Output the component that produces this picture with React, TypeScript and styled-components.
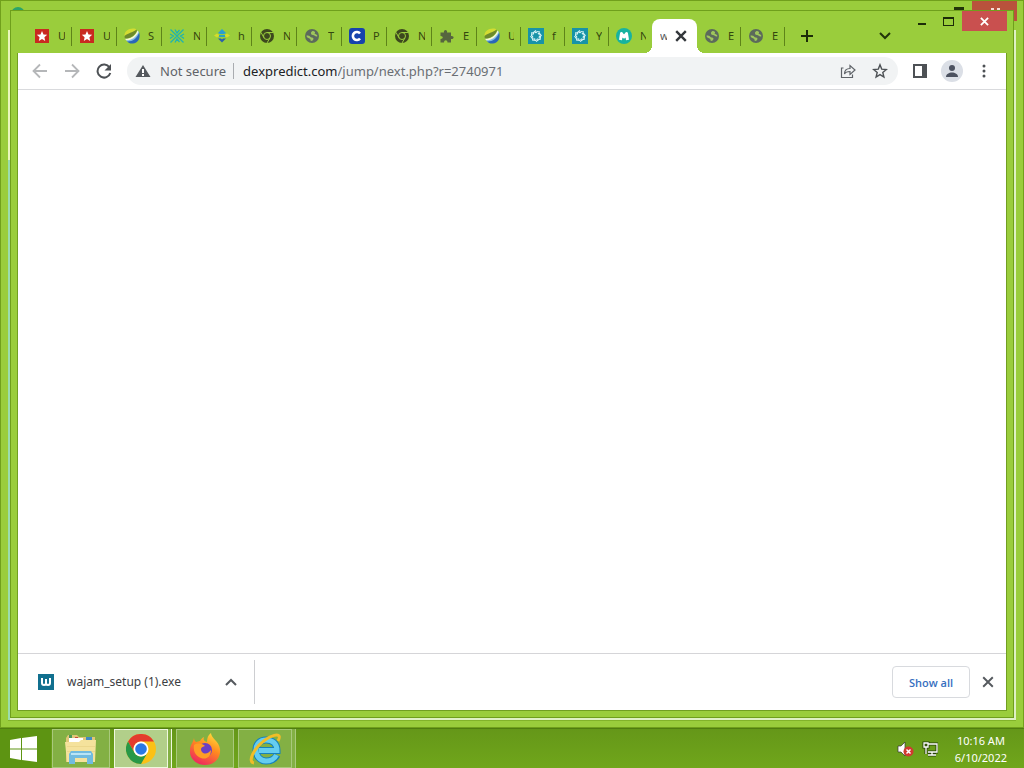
import React from 'react';
import styled, { createGlobalStyle, css } from 'styled-components';

const Global = createGlobalStyle`
  * { box-sizing: border-box; }
  body { margin: 0; font-family: "Noto Sans", "Open Sans", sans-serif; font-size: 13px; color: #3c4043; }
  button { font: inherit; color: inherit; background: none; border: 0; padding: 0; display: flex; align-items: center; justify-content: center; flex: none; }
  svg { display: block; flex: none; }
`;
const Desktop = styled.div`
  display: flex; flex-direction: column; min-height: 100vh; background: #9acd3c;
`;
const BackWindow = styled.section`
  position: relative; flex: 1; display: flex; padding: 9px 7px 7px;
  background: #9acd3c; border: 1px solid #71a01c;
`;
const BackPane = styled.div`
  flex: 1; display: flex; min-width: 0; padding: 0 2px 2px;
  background:
    linear-gradient(#9acd3c 20px, #eaf7bd 20px, #eaf7bd 150px, #9bdcae 150px) left / 2px 100% no-repeat,
    linear-gradient(#9acd3c 20px, #dff0c4 20px);
  box-shadow: 0 1px 0 #82b32a;
`;
const BackClose = styled.span`
  position: absolute; top: 0; right: 6px; width: 45px; height: 20px; background: #b9523c;
`;
const BackCloseMark = styled.span`
  position: absolute; top: 7px; right: 23px; width: 9px; height: 2px; background: linear-gradient(90deg, #f5dcd6 3px, transparent 3px, transparent 6px, #f5dcd6 6px);
`;
const BackMax = styled.span`
  position: absolute; top: 6px; right: 59px; width: 10px; height: 3px; background: #22350a;
`;
const BackIcon = styled.span`
  position: absolute; top: 6px; left: 10px; width: 14px; height: 7px; border-radius: 7px 7px 0 0; background: #2aa46a;
`;
const Window = styled.main`
  position: relative; flex: 1; min-width: 0; display: flex; flex-direction: column;
  background: #9acd3c; border: 1px solid #6f9f1c; padding: 0 6px 6px;
`;
const Caption = styled.div`
  position: absolute; top: 0; right: 6px; display: flex;
`;
const CaptionButton = styled.button<{ $close?: boolean }>`
  width: ${p => (p.$close ? 45 : 27)}px; height: 20px;
  background: ${p => (p.$close ? '#c9504f' : 'transparent')};
`;
const TabStrip = styled.nav`
  display: flex; align-items: flex-end; height: 42px; padding: 0 0 0 10px;
`;
const Tab = styled.button<{ $narrow?: boolean; $active?: boolean; $plain?: boolean }>`
  && { justify-content: flex-start; }
  position: relative; width: ${p => (p.$narrow ? 44 : 45)}px; height: 34px; padding: 0 7px; gap: 8px;
  font-size: 11px; color: #33470f;
  &::after { content: ''; position: absolute; right: 0; top: 8px; width: 1px; height: 19px; background: ${p => (p.$plain ? 'transparent' : '#5e8419')}; }
  ${p => p.$active && css`
    margin-left: -1px; background: #fff; border-radius: 8px 8px 0 0; padding: 0 8px; color: #55595e;
    &::before { content: ''; position: absolute; left: -8px; right: -8px; bottom: 0; height: 8px;
      background: radial-gradient(circle at 0 0, transparent 8px, #fff 8px) left / 8px 8px no-repeat,
        radial-gradient(circle at 100% 0, transparent 8px, #fff 8px) right / 8px 8px no-repeat; }
  `}
`;
const TabTitle = styled.span`
  width: 7px; overflow: hidden; white-space: nowrap; line-height: 16px; text-align: left;
`;
const StripButton = styled.button<{ $end?: boolean }>`
  width: 28px; height: 34px; margin-left: ${p => (p.$end ? 'auto' : '8px')}; margin-right: ${p => (p.$end ? '108px' : '0')};
`;
const Page = styled.div`
  flex: 1; display: flex; flex-direction: column; background: #fff; border: solid #719f22; border-width: 0 1px 1px;
`;
const Toolbar = styled.header`
  display: flex; align-items: center; height: 37px; padding: 0 6px; border-bottom: 1px solid #d9dadd;
`;
const ToolButton = styled.button`
  width: 32px; height: 32px;
`;
const Address = styled.form`
  flex: 1; display: flex; align-items: center; height: 28px; min-width: 0; margin: 0 6px 0 7px; padding: 0 2px 0 6px;
  border-radius: 14px; background: #f1f3f4;
`;
const Warning = styled.span`
  padding: 0 7px; color: #5f6368; white-space: nowrap; border-right: 1px solid #a9acb0; line-height: 16px;
`;
const UrlBox = styled.div`
  position: relative; flex: 1; min-width: 0; height: 20px; margin-left: 9px;
`;
const urlText = css`
  font: 13px/20px "Noto Sans", "Open Sans", sans-serif;
`;
const UrlInput = styled.input`
  ${urlText} display: block; width: 100%; height: 20px; padding: 0; border: 0; outline: 0; background: none; color: #6a6e73;
`;
const UrlHost = styled.span`
  ${urlText} position: absolute; left: 0; top: 0; color: #202124; background: #f1f3f4; pointer-events: none;
`;
const Avatar = styled.span`
  display: grid; place-items: center; width: 22px; height: 22px; border-radius: 50%; background: #dbdfe6;
`;
const Content = styled.div`
  flex: 1; background: #fff;
`;
const Shelf = styled.footer`
  display: flex; align-items: center; height: 57px; padding: 0 2px 0 20px; border-top: 1px solid #d5d5d8;
`;
const Download = styled.div`
  display: flex; align-items: center; width: 217px; height: 44px; padding-right: 7px; border-right: 1px solid #cdced1;
`;
const FileName = styled.span`
  flex: 1; padding-left: 13px; font-size: 12px; line-height: 18px; white-space: nowrap;
`;
const ShowAll = styled.button`
  && { color: #3670c0; }
  width: 78px; height: 32px; margin-left: auto; margin-right: 2px; border: 1px solid #d8dade; border-radius: 4px;
  font-family: "Open Sans", "Noto Sans", sans-serif; font-size: 11px; font-weight: 600;
`;
const Taskbar = styled.footer`
  display: flex; height: 40px; border-top: 1px solid #507d10; background: linear-gradient(#659719, #70a61b);
`;
const Start = styled.button`
  width: 51px; padding-right: 3px; background: #5d9412;
`;
const Task = styled.button<{ $active?: boolean; $stack?: boolean }>`
  width: ${p => (p.$stack ? 54 : 58)}px; margin-left: 1px; margin-right: ${p => (p.$stack ? 7 : 3)}px;
  background: ${p => (p.$active ? '#b2cf8a' : '#83b044')};
  border: 1px solid ${p => (p.$active ? '#eff8df' : '#a9c97c')};
  box-shadow: ${p => (p.$stack ? `3px 0 0 #83b044, 4px 0 0 ${p.$active ? '#eff8df' : '#a9c97c'}` : 'none')};
`;
const Tray = styled.div`
  display: flex; align-items: center; gap: 8px; margin-left: auto; padding-right: 17px;
`;
const Clock = styled.time`
  padding-left: 9px; color: #fff; font-size: 11px; line-height: 17px; text-align: center; white-space: nowrap;
`;

const Star = () => (
  <svg width="16" height="16" viewBox="0 0 16 16"><path fill="#c92a20" d="M1 1h14v14H1z" /><path fill="#fff" d="m8 3 1.5 3.4 3.7.4-2.8 2.4.8 3.7L8 11l-3.2 1.9.8-3.7-2.8-2.4 3.7-.4z" /></svg>
);
const Swirl = () => (
  <svg width="16" height="16" viewBox="0 0 16 16"><path fill="#2a66b8" d="M3 13C9 13 13 9 15 4c2 6-1 11-6 11.500-2.500.3-4.500-.5-6-2.500Z" /><path fill="#7fb9e6" d="M2 12c5 0 10-3 12.500-9L15 5c-2 5-6 8.500-11.500 8.500Z" /><path fill="#f4f8de" d="M1 10.500c6 .5 10-2.500 12.500-8L14.500 4c-2.500 5.500-7 8.500-12.500 8.300Z" /><path fill="#6d8a2c" d="M.5 9C1 5 5 2.500 12 1.500l1 1C11 8 6 10.500 1 10.500Z" /><path fill="#d3dc32" d="M.5 8C0 4 4 .5 9 .5c1.500 0 3 .5 3.500 1C9 4.500 5 4.500.5 8Z" /></svg>
);
const Cross = () => (
  <svg width="16" height="16" viewBox="0 0 16 16" fill="none" stroke="#1fb3b0" strokeWidth="1.300"><path d="m1.500 1.500 13 13M14.500 1.500l-13 13M6 1.500 8 5l2.500-3M6 14.500 8 11l2.500 3M1 6l3.500 2L1 10.500M15 6l-3.500 2 3.500 2.500" /></svg>
);
const Diamond = () => (
  <svg width="16" height="16" viewBox="0 0 16 16"><path fill="#2a9fd0" d="m8 1 4 4-2 1H6L4 5z" /><path fill="#d6dc2a" d="m0 7.500 3-2L6 7.500l-3 2zM10 7.500l3-2 3 2-3 2z" /><path fill="#29a3c4" d="M5 7h6v2H5z" /><path fill="#2a5fae" d="M4 10.500h3L8 11.500l1-1h3l-4 4z" /></svg>
);
const ChromeGrey = () => (
  <svg width="16" height="16" viewBox="0 0 16 16"><circle cx="8" cy="8" r="7" fill="#3d481e" /><g fill="none" stroke="#9acd3c"><circle cx="8" cy="8" r="3.5" /><path d="M8 4.5h6M5 9.8 2 4.4M11 9.8 8 15" /></g></svg>
);
const Globe = () => (
  <svg width="16" height="16" viewBox="0 0 16 16"><circle cx="8" cy="8" r="7" fill="#5c6a5b" /><path fill="#9fc65c" d="M2.500 7.500c2 0 3 0 3.500 1 1 1.500 3.500.5 3.500 2.500-.5 1-1 2-2.500 2-1-1 0-2-1.500-2.500S2.500 9.500 2.500 7.500ZM7 4.500c.5-1.500 2.500-2 3.500-1s.5 1.500 0 2l2.500 1.500c.5 1 .5 1.500-.5 1.500-1.500 0-2-1.500-3.500-1.500C7 7 7 6 7 4.500Z" /></svg>
);
const CoinC = () => (
  <svg width="16" height="16" viewBox="0 0 16 16"><rect width="16" height="16" rx="3" fill="#1643ad" /><path fill="none" stroke="#fff" strokeWidth="2.600" d="M11 5.500a4 4 0 1 0 0 5" /></svg>
);
const Puzzle = () => (
  <svg width="16" height="16" viewBox="0 0 16 16"><path fill="#56653f" d="M1.500 4.500H5c-1-3.500 4-3.500 3 0h4v3.500c3.500-.5 3.500 3.500 0 3v3.500H8.500c0-3-3.500-3-3.500 0H1.500V11c3 0 3-3 0-3z" /></svg>
);
const Ring = () => (
  <svg width="16" height="16" viewBox="0 0 16 16"><path fill="#1793a8" d="M0 0h16v16H0z" /><g fill="none" stroke="#d5f4f5" strokeWidth="1.200"><path d="M8 2.500 5 5M12 4 8.500 3.500M13.500 8 11 5M12 12l.5-4M8 13.500l3.500-2.500M4 12l4 .5M2.500 8 5 11.500M4 4l-.5 4" /><circle cx="8" cy="8" r="3.500" strokeDasharray="2 1" /></g></svg>
);
const MLogo = () => (
  <svg width="16" height="16" viewBox="0 0 16 16"><circle cx="8" cy="8" r="8" fill="#17b3a0" /><path fill="none" stroke="#fff" strokeWidth="3" strokeLinejoin="round" d="M4.500 12 5.500 5.500 8 9l2.500-3.500 1 6.500" /></svg>
);
const X = ({ size = 10, color = '#33373b', w = 2 }: { size?: number; color?: string; w?: number }) => (
  <svg width={size} height={size} viewBox="0 0 10 10" stroke={color} strokeWidth={w}><path d="m1 1 8 8M9 1 1 9" /></svg>
);
const Arrow = ({ right }: { right?: boolean }) => (
  <svg width="16" height="16" viewBox="0 0 16 16" fill="none" stroke="#b5b7b9" strokeWidth="1.800"><path d={right ? 'M1 8h13M8 1.500 14.500 8 8 14.500' : 'M15 8H2M8 1.500 1.500 8 8 14.500'} /></svg>
);
const Explorer = () => (
  <svg width="34" height="32" viewBox="0 0 34 32"><path fill="#dfc677" d="M2 5 4 2h9l2 2h16v25H2z" /><path fill="#4b9a57" d="M5 2h3v3H5z" /><path fill="#c5493a" d="M11 4h3v2h-3z" /><path fill="#438bc2" d="M22 4h6v3h-6z" /><path fill="#fff" d="M5 5h14v3h9v3H5z" /><path fill="#f5e29c" d="M1 9h14l2-2h15l-1 22H3z" /><path fill="#ecd78c" d="M3 13h28v1H3zM3 18h28v1H3z" /><path fill="#71bbdf" d="M5 31V21l2-3h20l2 3v10h-6v-6H11v6z" /><path fill="#b9e4f5" d="M7 20h20v2H7z" /></svg>
);
const Chrome = () => (
  <svg width="30" height="30" viewBox="0 0 30 30"><circle cx="15" cy="15" r="15" fill="#fbc116" /><path fill="#e33b2e" d="M2 7.500A15 15 0 0 1 28 7.500H15a7.500 7.500 0 0 0-6.500 11.300z" /><path fill="#279847" d="M2 7.500A15 15 0 0 0 15 30l6.500-11.200A7.500 7.500 0 0 1 8.500 18.800z" /><circle cx="15" cy="15" r="7.500" fill="#fff" /><circle cx="15" cy="15" r="5.800" fill="#2b78e4" /></svg>
);
const Firefox = () => (
  <svg width="32" height="32" viewBox="0 0 32 32"><defs><linearGradient id="ff" x1=".8" y1="0" x2=".3" y2="1"><stop offset="0" stopColor="#ffdf3c" /><stop offset=".45" stopColor="#ff8a1f" /><stop offset="1" stopColor="#ee2361" /></linearGradient></defs><path fill="url(#ff)" d="M5 5c0 2 1 3 2 4l4-1c1-2 2-3 4-4-1 3 0 4 3 5 0-4 1-7 4-9 0 5 8 8 9 16 1 10-6 16-15 16S0 25 1 17C1 12 4 10 5 5Z" /><circle cx="16" cy="17" r="7" fill="#6a3fc5" /><path fill="#ff9d25" d="M5 12c4-3 9-1 11 1-4 1-5 3-3 6 3 3 7 1 9-2 0 7-5 10-10 8-6-2-8-8-7-13Z" /></svg>
);
const Explorer2 = () => (
  <svg width="34" height="34" viewBox="0 0 34 34" fill="none"><path stroke="#1581bd" strokeWidth="7" d="M29 23c-2 4-6 6-11 6-6 0-10-5-10-11S12 8 18 8c7 0 11 4 11 10.500H11" /><path stroke="#65cdf1" strokeWidth="5" d="M28.500 23c-2 4-6 6-10.500 6-6 0-10-5-10-11S12 8 18 8c7 0 11 4 11 10.500H11" /><path stroke="#f1bd28" strokeWidth="3" d="M6 31C-1 30 6 16 17 8c7-5 13-6 14-4 1 1 0 3-1 5" /></svg>
);

type TabData = { title: string; icon: React.ReactNode; narrow?: boolean; plain?: boolean };
const before: TabData[] = [
  { title: 'U', icon: <Star /> }, { title: 'U', icon: <Star /> }, { title: 'S', icon: <Swirl /> },
  { title: 'N', icon: <Cross /> }, { title: 'h', icon: <Diamond /> }, { title: 'N', icon: <ChromeGrey /> },
  { title: 'T', icon: <Globe /> }, { title: 'P', icon: <CoinC /> }, { title: 'N', icon: <ChromeGrey /> },
  { title: 'E', icon: <Puzzle /> }, { title: 'U', icon: <Swirl />, narrow: true }, { title: 'f', icon: <Ring />, narrow: true },
  { title: 'Y', icon: <Ring />, narrow: true }, { title: 'N', icon: <MLogo />, narrow: true, plain: true },
];
const after: TabData[] = [{ title: 'E', icon: <Globe />, narrow: true }, { title: 'E', icon: <Globe />, narrow: true }];
const TabItem = ({ tab }: { tab: TabData }) => (
  <Tab type="button" $narrow={tab.narrow} $plain={tab.plain}>{tab.icon}<TabTitle>{tab.title}</TabTitle></Tab>
);

export default function App() {
  return (
    <Desktop>
      <Global />
      <BackWindow>
        <BackIcon /><BackMax /><BackClose /><BackCloseMark />
        <BackPane>
          <Window>
            <TabStrip aria-label="Tabs">
              {before.map((t, i) => <TabItem key={i} tab={t} />)}
              <Tab type="button" $active $plain><TabTitle>w</TabTitle><X size={12} /></Tab>
              {after.map((t, i) => <TabItem key={i} tab={t} />)}
              <StripButton type="button" aria-label="New tab"><svg width="12" height="12" viewBox="0 0 12 12" stroke="#1c2c08" strokeWidth="2"><path d="M6 0v12M0 6h12" /></svg></StripButton>
              <StripButton type="button" $end aria-label="Search tabs"><svg width="12" height="8" viewBox="0 0 12 8" fill="none" stroke="#22350a" strokeWidth="2"><path d="m1 1 5 5 5-5" /></svg></StripButton>
            </TabStrip>
            <Page>
              <Toolbar>
                <ToolButton type="button" aria-label="Back"><Arrow /></ToolButton>
                <ToolButton type="button" aria-label="Forward"><Arrow right /></ToolButton>
                <ToolButton type="button" aria-label="Reload"><svg width="16" height="16" viewBox="0 0 16 16"><path fill="none" stroke="#4d5155" strokeWidth="2" d="M13.500 4.500A6.500 6.500 0 1 0 14.300 10" /><path fill="#4d5155" d="M15 1v6.500H8.500z" /></svg></ToolButton>
                <Address>
                  <svg width="20" height="14" viewBox="0 0 20 14"><path fill="#55595e" d="m10 1 7.500 12h-15z" /><path fill="#fff" d="M9 5h2v4H9zM9 10h2v2H9z" /></svg>
                  <Warning>Not secure</Warning>
                  <UrlBox>
                    <UrlInput aria-label="Address" readOnly value="dexpredict.com/jump/next.php?r=2740971" />
                    <UrlHost aria-hidden="true">dexpredict.com</UrlHost>
                  </UrlBox>
                  <ToolButton type="button" aria-label="Share"><svg width="16" height="16" viewBox="0 0 16 16" fill="none" stroke="#5f6368" strokeWidth="1.200"><path d="M3.500 5H1.500v9.500h11v-3M4.500 11c0-4 2-5.500 5.500-5.500V2.500L15 7l-5 4.500v-3C7.500 8.500 5.500 9 4.500 11Z" /></svg></ToolButton>
                  <ToolButton type="button" aria-label="Bookmark"><svg width="16" height="16" viewBox="0 0 16 16" fill="none" stroke="#4d5155" strokeWidth="1.400"><path d="m8 1.800 1.700 4.300 4.600.4-3.500 3 1.100 4.500L8 11.600 4.100 14l1.100-4.500-3.500-3 4.600-.4z" /></svg></ToolButton>
                </Address>
                <ToolButton type="button" aria-label="Side panel"><svg width="14" height="14" viewBox="0 0 14 14"><path fill="#4d5155" d="M0 0h14v14H0z" /><path fill="#fff" d="M2 2h7v10H2z" /></svg></ToolButton>
                <ToolButton type="button" aria-label="Profile"><Avatar><svg width="14" height="14" viewBox="0 0 14 14" fill="#4c5260"><circle cx="7" cy="4" r="3" /><path d="M1 13c0-6 12-6 12 0z" /></svg></Avatar></ToolButton>
                <ToolButton type="button" aria-label="Menu"><svg width="4" height="14" viewBox="0 0 4 14" fill="#4d5155"><circle cx="2" cy="2" r="1.500" /><circle cx="2" cy="7" r="1.500" /><circle cx="2" cy="12" r="1.500" /></svg></ToolButton>
              </Toolbar>
              <Content />
              <Shelf>
                <Download>
                  <svg width="16" height="16" viewBox="0 0 16 16"><path fill="#11708f" d="M0 0h16v16H0z" /><path fill="none" stroke="#fff" strokeWidth="2" d="M4 4v5q0 2 2 2t2-2V5v4q0 2 2 2t2-2V4" /></svg>
                  <FileName>wajam_setup (1).exe</FileName>
                  <ToolButton type="button" aria-label="Download options"><svg width="12" height="8" viewBox="0 0 12 8" fill="none" stroke="#55595e" strokeWidth="2"><path d="m1 7 5-5 5 5" /></svg></ToolButton>
                </Download>
                <ShowAll type="button">Show all</ShowAll>
                <ToolButton type="button" aria-label="Close downloads"><X size={12} color="#55595e" w={1.6} /></ToolButton>
              </Shelf>
            </Page>
            <Caption>
              <CaptionButton type="button" aria-label="Minimize"><svg width="10" height="10" viewBox="0 0 10 10"><path fill="#1c2c08" d="M1 7h8v2H1z" /></svg></CaptionButton>
              <CaptionButton type="button" aria-label="Maximize"><svg width="11" height="9" viewBox="0 0 11 9"><path fill="#1c2c08" d="M0 0h11v9H0zM1 2v6h9V2z" fillRule="evenodd" /></svg></CaptionButton>
              <CaptionButton type="button" $close aria-label="Close"><X size={9} color="#fff" w={2} /></CaptionButton>
            </Caption>
          </Window>
        </BackPane>
      </BackWindow>
      <Taskbar>
        <Start type="button" aria-label="Start"><svg width="28" height="26" viewBox="0 0 28 26" fill="#fff"><path d="m0 4 11-2v10.500H0zM12 2l15-2v12.500H12zM0 13.500h11V24L0 22zM12 13.500h15V26l-15-2z" /></svg></Start>
        <Task type="button" aria-label="File Explorer"><Explorer /></Task>
        <Task type="button" $active $stack aria-label="Chrome"><Chrome /></Task>
        <Task type="button" aria-label="Firefox"><Firefox /></Task>
        <Task type="button" $stack aria-label="Internet Explorer"><Explorer2 /></Task>
        <Tray>
          <svg width="17" height="16" viewBox="0 0 17 16"><path fill="#fff" stroke="#333" strokeWidth=".7" d="M1 5h3l4-4v14l-4-4H1z" /><circle cx="11.500" cy="10.500" r="5" fill="#d13a30" /><path stroke="#fff" strokeWidth="1.500" d="m9.500 8.500 4 4M13.500 8.500l-4 4" /></svg>
          <svg width="16" height="16" viewBox="0 0 16 16" fill="none"><path stroke="#26400a" strokeWidth="3" d="M6 3h9v8H6M10 11v3M6 14h8M2 2h4v4H2zM4 6v7" /><path stroke="#fff" strokeWidth="1.300" d="M6 3h9v8H6M10 11v3M6 14h8M2 2h4v4H2zM4 6v7" /></svg>
          <Clock>10:16 AM<br />6/10/2022</Clock>
        </Tray>
      </Taskbar>
    </Desktop>
  );
}
